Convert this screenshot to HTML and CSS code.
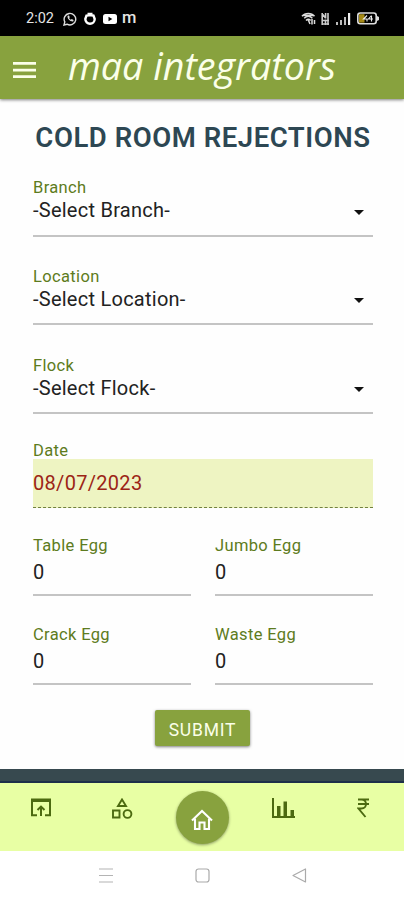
FILE: index.html
```
<!DOCTYPE html>
<html lang="en">
<head>
    <meta charset="UTF-8">
    <meta name="viewport" content="width=device-width, initial-scale=1">
    <title>Cold Room Rejections</title>
    <link rel="stylesheet" href="styles.css">
</head>
<body>

    <!-- Status bar -->
    <div class="status-bar">
        <span class="time">2:02</span>
        <svg class="st-whatsapp" width="14" height="14" viewBox="0 0 14 14" fill="none" stroke="#ddd">
            <path d="M1 13l.8-3.1A5.8 5.8 0 1 1 4 12.2z" stroke-width="1.4"/>
            <path d="M4.6 3.800c-.7 2.600 2.600 6.300 5.600 5.700l.4-1.500-1.900-.9-.9.7c-.9-.4-1.400-1-1.700-1.700l.7-.8-.8-1.700z" fill="#ddd" stroke="none"/>
        </svg>
        <svg class="st-ring" width="14" height="14" viewBox="0 0 14 14" fill="none" stroke="#fff">
            <path d="M3.500 3.600L5.800 3.200h2.400l2.300.4 1.200 3.400a4.700 4.700 0 1 1-9.400 0z" stroke-width="2.400"/>
            <path d="M4.500 1.500h5" stroke-width="1.500"/>
        </svg>
        <svg class="st-video" width="14" height="12" viewBox="0 0 14 12">
            <rect x="0" y="1" width="14" height="10" rx="2.500" fill="#fff"/>
            <path d="M5.500 3.700v4.600L9.300 6z" fill="#000"/>
        </svg>
        <span class="m-badge">m</span>
        <span class="status-space"></span>
        <svg class="st-wifi" width="15" height="14" viewBox="0 0 15 14" fill="none" stroke="#ddd" stroke-width="1.500">
            <path d="M1 4.200C4 .6 10.500.6 13.500 4.200M3.200 6.300c2.300-2.300 5.800-2.300 8.200 0M5 8.500c1.400-1.300 3.300-1.300 4.600 0M2.500 3.600h9.500"/>
            <path d="M7.300 8l1.700 4M11 7v5.500M13.500 8v4"/>
        </svg>
        <svg class="st-lte" width="9" height="14" viewBox="0 0 9 14" fill="none" stroke="#ccc" stroke-width="1.600">
            <path d="M1.200 1v12M1 1.500l3.500 4.500M4.600 1v5.500M7 1v12M4.500 7.500v5.500M1 8.500h7M1 12h7"/>
        </svg>
        <svg class="st-signal" width="16" height="13" viewBox="0 0 16 13">
            <path d="M1 10h2v3H1zM5 8h2v5H5zM9 5h2v8H9z" fill="#bbb"/>
            <path d="M13 1h2.200v12H13z" fill="#eee"/>
        </svg>
        <svg class="st-battery" width="23" height="13" viewBox="0 0 23 13">
            <rect x=".8" y="1" width="18.400" height="10.800" rx="2.500" fill="#000" stroke="#ddd" stroke-width="1.600"/>
            <rect x="2" y="2.200" width="5.500" height="8.400" fill="#a58a16"/>
            <path d="M20 4l2 1v3l-2 1z" fill="#ddd"/>
            <path d="M10 3.500L6.500 7H10v2.500M14.500 3.500L11.500 7h4.500M14.500 4v5.500" fill="none" stroke="#eee" stroke-width="1.100"/>
        </svg>
    </div>

    <!-- App header -->
    <header class="app-header">
        <svg class="menu-icon" width="23" height="16" viewBox="0 0 23 16" fill="#fbffe9">
            <path d="M0 0h23v2.700H0zM0 6.700h23v2.700H0zM0 13.300h23V16H0z"/>
        </svg>
        <svg class="logo" width="276" height="62" viewBox="0 0 276 62">
            <text x="4" y="43" textLength="268" lengthAdjust="spacingAndGlyphs">maa integrators</text>
        </svg>
    </header>

    <main class="page">
        <h1>COLD ROOM REJECTIONS</h1>

        <div class="field">
            <label>Branch</label>
            <div class="value">-Select Branch-<i class="arrow"></i></div>
        </div>
        <div class="field">
            <label>Location</label>
            <div class="value">-Select Location-<i class="arrow"></i></div>
        </div>
        <div class="field">
            <label>Flock</label>
            <div class="value">-Select Flock-<i class="arrow"></i></div>
        </div>

        <div class="date-field">
            <label>Date</label>
            <div class="date-value">08/07/2023</div>
        </div>

        <div class="egg-grid">
            <div class="field">
                <label>Table Egg</label>
                <div class="value">0</div>
            </div>
            <div class="field">
                <label>Jumbo Egg</label>
                <div class="value">0</div>
            </div>
            <div class="field">
                <label>Crack Egg</label>
                <div class="value">0</div>
            </div>
            <div class="field">
                <label>Waste Egg</label>
                <div class="value">0</div>
            </div>
        </div>

        <button class="submit-button">SUBMIT</button>
    </main>

    <div class="divider-bar"></div>

    <!-- Bottom navigation -->
    <nav class="bottom-nav">
        <a class="nav-item">
            <svg width="20" height="19" viewBox="0 0 20 19" fill="none" stroke="#4c6a10" stroke-width="2">
                <path d="M6 17.300H1V1.500h18v15.800h-5"/>
                <path d="M1 2.500h18" stroke-width="3"/>
                <path d="M10 18V9M6.500 12L10 8.600l3.500 3.400"/>
            </svg>
        </a>
        <a class="nav-item">
            <svg width="22" height="22" viewBox="0 0 22 22" fill="none" stroke="#4c6a10" stroke-width="1.900">
                <path d="M11 1.500L7 8h8z"/>
                <path d="M2 12.500h6.500v7H2z"/>
                <circle cx="16.500" cy="16" r="3.900"/>
            </svg>
        </a>
        <a class="nav-item home">
            <svg width="22" height="22" viewBox="0 0 22 22" fill="none" stroke="#fff" stroke-width="2.100">
                <path d="M1 11.500L11 2l10 9.500"/>
                <path d="M4 9.500V20h4.500v-6.500h5V20H18V9.500"/>
            </svg>
        </a>
        <a class="nav-item">
            <svg width="23" height="20" viewBox="0 0 23 20" fill="#4c6a10">
                <path d="M0 0h2v18h21v2H0zM5 8h3.500v10H5zM11.500 3.500H15V18h-3.500zM18.500 12H22v6h-3.500z"/>
            </svg>
        </a>
        <a class="nav-item">
            <svg width="13" height="20" viewBox="0 0 13 20" fill="none" stroke="#4c6a10" stroke-width="1.900">
                <path d="M1 1.500h11M1 6h11M1 1.500h3.500c6 0 6 9 0 9H1.500L8.500 19"/>
            </svg>
        </a>
    </nav>

    <!-- Android buttons -->
    <div class="system-nav">
        <svg width="14" height="15" viewBox="0 0 14 15" stroke="#b4b4b4" stroke-width="1.200">
            <path d="M0 1h14M0 7.500h14M0 14h14"/>
        </svg>
        <svg width="15" height="15" viewBox="0 0 15 15" fill="none" stroke="#aaa" stroke-width="1.200">
            <rect x="1" y="1" width="13" height="13" rx="2.500"/>
        </svg>
        <svg width="15" height="15" viewBox="0 0 15 15" fill="none" stroke="#aaa" stroke-width="1.200" stroke-linejoin="round">
            <path d="M1 7.500L13.500 1v13z"/>
        </svg>
    </div>

</body>
</html>
```

FILE: styles.css
```
* {
    box-sizing: border-box;
}
body {
    margin: 0;
    height: 900px;
    display: flex;
    flex-direction: column;
    overflow: hidden;
    background-color: #fefefe;
    font-family: Roboto, sans-serif;
}
svg {
    display: block;
    flex: none;
}
/* status bar */
.status-bar {
    display: flex;
    align-items: center;
    height: 36px;
    padding: 1px 24px 0 26px;
    background-color: #000;
    color: #e4e4e4;
}
.time {
    width: 37px;
    font-size: 14.5px;
}
.st-ring {
    margin-left: 6px;
}
.st-video {
    margin-left: 6px;
}
.m-badge {
    margin: -1px 0 0 5px;
    font-size: 16.5px;
    font-weight: 500;
    line-height: 18px;
}
.status-space {
    flex: 1;
}
.st-lte {
    margin-left: 5px;
}
.st-signal {
    margin-left: 5px;
}
.st-battery {
    margin-left: 6px;
}
/* header */
.app-header {
    display: flex;
    align-items: center;
    height: 63px;
    padding-left: 13px;
    background-color: #88a23e;
    box-shadow: 0 1px 3px rgba(0, 0, 0, 0.5);
}
.menu-icon {
    margin-top: 5px;
}
.logo {
    margin-left: 28px;
}
.logo text {
    font-family: "Open Sans", "Noto Sans", sans-serif;
    font-size: 38px;
    font-style: italic;
    fill: #fbffe9;
}
/* form */
.page {
    height: 670px;
    padding: 23px 31px 0 33px;
}
h1 {
    height: 56px;
    margin: 0;
    color: #2d4753;
    font-size: 27.5px;
    font-weight: 600;
    letter-spacing: 0.55px;
    line-height: 32px;
    text-align: center;
    white-space: nowrap;
}
label {
    display: block;
    height: 20px;
    color: #5d7b20;
    font-size: 16.5px;
    letter-spacing: 0.35px;
    line-height: 20px;
}
.field {
    height: 58.5px;
    margin-bottom: 30.25px;
    border-bottom: 2px solid #c4c4c4;
}
.value {
    display: flex;
    align-items: center;
    justify-content: space-between;
    height: 24px;
    color: #222;
    font-size: 20px;
    letter-spacing: 0.25px;
    line-height: 24px;
}
.arrow {
    margin: 4px 9px 0 0;
    border-top: 5px solid #111;
    border-left: 5px solid transparent;
    border-right: 5px solid transparent;
}
.date-field {
    margin-top: -3px;
}
.date-field label {
    height: 18px;
}
.date-value {
    height: 49px;
    border-bottom: 1px dashed #71803f;
    background-color: #eef4c2;
    color: #9c2416;
    font-size: 20px;
    letter-spacing: 0.3px;
    line-height: 48px;
}
.egg-grid {
    display: grid;
    grid-template-columns: 1fr 1fr;
    column-gap: 24px;
    margin-top: 28px;
}
.egg-grid .field {
    height: 60px;
    margin-bottom: 29px;
}
.egg-grid .value {
    height: 32px;
    line-height: 32px;
}
.submit-button {
    display: block;
    width: 95px;
    height: 36px;
    margin: -4px 0 0 122px;
    padding: 4px 0 0;
    border: none;
    border-radius: 2px;
    background-color: #88a23e;
    box-shadow: 0 1px 3px rgba(0, 0, 0, 0.5);
    color: #fbffe9;
    font-family: Roboto, sans-serif;
    font-size: 17.5px;
    letter-spacing: 0.8px;
}
/* bottom area */
.divider-bar {
    height: 14px;
    border-bottom: 2px solid #1d2f4a;
    background-color: #37494f;
}
.bottom-nav {
    display: grid;
    grid-template-columns: repeat(5, 1fr);
    justify-items: center;
    height: 68px;
    padding: 8px 0 0 1px;
    background-color: #e8ffa4;
}
.nav-item {
    padding-top: 7px;
}
.nav-item.home {
    display: flex;
    justify-content: center;
    width: 53px;
    height: 53px;
    padding-top: 18px;
    border-radius: 50%;
    background-color: #88a23e;
    box-shadow: 0 1px 3px rgba(0, 0, 0, 0.4);
}
.system-nav {
    display: flex;
    justify-content: space-between;
    height: 49px;
    padding: 17px 97px 0 99px;
    background-color: #fff;
}
```
